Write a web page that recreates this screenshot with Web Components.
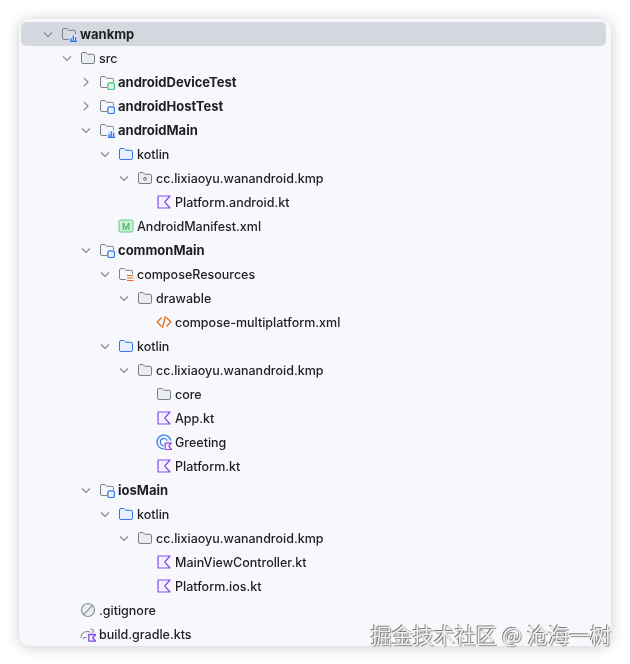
<!DOCTYPE html>
<html lang="zh">
<head>
<meta charset="utf-8">
<title>wankmp</title>
<style>
  html, body { margin: 0; background: #fff; }
  body { width: 630px; height: 664px; overflow: hidden; }
</style>
</head>
<body>
<project-tree>
  <tree-row depth="0" chevron="down" icon="module-bars" bold selected>wankmp</tree-row>
  <tree-row depth="1" chevron="down" icon="folder">src</tree-row>
  <tree-row depth="2" chevron="right" icon="module-green" bold>androidDeviceTest</tree-row>
  <tree-row depth="2" chevron="right" icon="module-blue" bold>androidHostTest</tree-row>
  <tree-row depth="2" chevron="down" icon="module-bars" bold>androidMain</tree-row>
  <tree-row depth="3" chevron="down" icon="folder-blue">kotlin</tree-row>
  <tree-row depth="4" chevron="down" icon="package">cc.lixiaoyu.wanandroid.kmp</tree-row>
  <tree-row depth="5" icon="kotlin">Platform.android.kt</tree-row>
  <tree-row depth="3" icon="manifest">AndroidManifest.xml</tree-row>
  <tree-row depth="2" chevron="down" icon="module-blue" bold>commonMain</tree-row>
  <tree-row depth="3" chevron="down" icon="resources">composeResources</tree-row>
  <tree-row depth="4" chevron="down" icon="folder">drawable</tree-row>
  <tree-row depth="5" icon="xml">compose-multiplatform.xml</tree-row>
  <tree-row depth="3" chevron="down" icon="folder-blue">kotlin</tree-row>
  <tree-row depth="4" chevron="down" icon="folder">cc.lixiaoyu.wanandroid.kmp</tree-row>
  <tree-row depth="5" icon="folder">core</tree-row>
  <tree-row depth="5" icon="kotlin">App.kt</tree-row>
  <tree-row depth="5" icon="greeting">Greeting</tree-row>
  <tree-row depth="5" icon="kotlin">Platform.kt</tree-row>
  <tree-row depth="2" chevron="down" icon="module-blue" bold>iosMain</tree-row>
  <tree-row depth="3" chevron="down" icon="folder-blue">kotlin</tree-row>
  <tree-row depth="4" chevron="down" icon="folder">cc.lixiaoyu.wanandroid.kmp</tree-row>
  <tree-row depth="5" icon="kotlin">MainViewController.kt</tree-row>
  <tree-row depth="5" icon="kotlin">Platform.ios.kt</tree-row>
  <tree-row depth="1" icon="ignore">.gitignore</tree-row>
  <tree-row depth="1" icon="gradle">build.gradle.kts</tree-row>
  <water-mark slot="mark">掘金技术社区 @ 沧海一树</water-mark>
</project-tree>

<script>
/* trazos base de los iconos */
const FOLDER = 'M1.500 4a1.500 1.500 0 0 1 1.500-1.500h3l1.800 1.800H13a1.500 1.500 0 0 1 1.500 1.500v6.200a1.500 1.500 0 0 1-1.500 1.500H3A1.500 1.500 0 0 1 1.500 12z';
const CUT_FOLDER = 'M8 13.500H3A1.500 1.500 0 0 1 1.500 12V4A1.500 1.500 0 0 1 3 2.500h3l1.800 1.800H13a1.500 1.500 0 0 1 1.500 1.500V8';
const KOTLIN = 'M2 2h12L8.800 8l5.200 6H2z';

const folder = (stroke, fill) =>
  `<path d="${FOLDER}" fill="${fill}" stroke="${stroke}"/>`;
const cutFolder = `<path d="${CUT_FOLDER}" fill="none" stroke="#7c808c"/>`;
const badge = (stroke, fill) =>
  `<rect x="8.800" y="8.800" width="6.700" height="6.700" rx="1.800" fill="${fill}" stroke="${stroke}" stroke-width="1.200"/>`;

const ICONS = {
  'folder': folder('#7c808c', '#ebecf0'),
  'folder-blue': folder('#3574f0', '#e7effd'),
  'package': folder('#7c808c', '#ebecf0') + '<circle cx="8" cy="8.800" r="1.400" fill="none" stroke="#6c707e"/>',
  'module-green': cutFolder + badge('#3fc07a', '#dff5e6'),
  'module-blue': cutFolder + badge('#3574f0', '#e7effd'),
  'module-bars': cutFolder +
    '<rect x="8.500" y="8.500" width="7.500" height="7.500" rx="1.500" fill="#dbe6fb"/><path d="M10 15.500v-3.500M12.300 15.500V9.500M14.600 15.500v-4.500M8.800 15.500H16" fill="none" stroke="#3574f0" stroke-width="1.300"/>',
  'resources': cutFolder +
    '<path d="M9 9.500h6.500M9 12h6.500M9 14.500h6.500" fill="none" stroke="#e66d17" stroke-width="1.200"/>',
  'kotlin': `<path d="${KOTLIN}" fill="#f3effe" stroke="#834df0" stroke-width="1.200" stroke-linejoin="round"/>`,
  'manifest': '<rect x="1" y="2" width="14" height="12" rx="1.500" fill="#c9f2d6" stroke="#62c98a"/>' +
    '<text x="8" y="11.500" text-anchor="middle" font-family="Inter, sans-serif" font-size="9" fill="#3fae6a">M</text>',
  'xml': '<path d="M5.500 3.500 1.200 8l4.300 4.500M10.500 3.500 14.800 8l-4.300 4.500" fill="none" stroke="#e66d17" stroke-width="1.300"/><path d="M9.500 2 6.500 14" fill="none" stroke="#e66d17" stroke-width="1.300"/>',
  'greeting': '<path d="M8 15a7 7 0 1 1 6.800-8.500" fill="#e7effd" stroke="#3574f0" stroke-width="1.200"/><path d="M8 11.500a3.500 3.500 0 1 1 3.200-4.800" fill="#fff" stroke="#3574f0" stroke-width="1.100"/>' +
    '<path d="M9.200 9.200h6.300l-2.700 3 2.700 3.300H9.200z" fill="#f3effe" stroke="#834df0" stroke-width="1.200" stroke-linejoin="round"/>',
  'ignore': '<circle cx="8" cy="8" r="6.500" fill="#ebecf0" stroke="#8b8f9a" stroke-width="1.200"/><path d="M3.600 12.600 12.400 3.400" fill="none" stroke="#8b8f9a" stroke-width="1.200"/>',
  'gradle': '<path d="M.8 12c.5-3 2.200-5.700 4.700-6.200 1.800-.4 3.500-.2 4.800.3M10.500 3.300c1.200-.7 3 0 3 1.400 0 1-.8 1.500-1.700 1.700M3 13.500l.7-2h3.300" fill="none" stroke="#8b8f9a" stroke-width="1.100"/>' +
    '<path d="M8.800 8.500h6.900l-3 3.300 3 3.400H8.800z" fill="#f3effe" stroke="#834df0" stroke-width="1.300" stroke-linejoin="round"/>'
};

/* tarjeta con sombra que contiene el arbol */
class ProjectTree extends HTMLElement {
  constructor() {
    super();
    this.attachShadow({ mode: 'open' });
  }

  connectedCallback() {
    this.shadowRoot.innerHTML = `
      <style>
        :host {
          display: block;
          padding: 19px 19px 18px 19px;
          position: relative;
          height: 664px;
          box-sizing: border-box;
        }
        .tarjeta {
          height: 100%;
          box-sizing: border-box;
          padding: 3px 5px 0 2px;
          background: #f7f8fc;
          border-radius: 10px;
          box-shadow: 0 1px 14px rgba(0, 0, 0, 0.2);
          overflow: hidden;
        }
        .filas { filter: blur(0.45px); }
      </style>
      <div class="tarjeta"><div class="filas"><slot></slot></div></div>
      <slot name="mark"></slot>
    `;
  }
}

/* componente para cada fila del arbol */
class TreeRow extends HTMLElement {
  constructor() {
    super();
    this.attachShadow({ mode: 'open' });
  }

  connectedCallback() {
    const depth = Number(this.getAttribute('depth') || 0);
    const chevron = this.getAttribute('chevron');
    const icon = ICONS[this.getAttribute('icon')] || '';
    const flecha = {
      down: '<path d="M3 5.500 7 9.500l4-4" />',
      right: '<path d="M5 3l4 4-4 4" />'
    }[chevron] || '';

    this.shadowRoot.innerHTML = `
      <style>
        :host {
          display: flex;
          align-items: center;
          height: 24px;
          padding-left: ${20 + depth * 19}px;
          font: 500 12.500px/24px Inter, "Liberation Sans", sans-serif;
          color: #1e1f22;
          white-space: nowrap;
        }
        :host([selected]) {
          background: #d5d8df;
          border-radius: 5px;
        }
        :host([bold]) { font-weight: 700; font-size: 13px; }
        /* el texto de 12.5px queda un pixel alto sin esto */
        .texto { padding-top: 2px; }
        :host([bold]) .texto { padding-top: 0; }
        .flecha { width: 14px; height: 14px; flex: none; margin-right: 6px; }
        .flecha path { fill: none; stroke: #868a95; stroke-width: 1.200; }
        .icono { width: 16px; height: 16px; flex: none; margin-right: 3px; }
      </style>
      <svg class="flecha" viewBox="0 0 14 14">${flecha}</svg>
      <svg class="icono" viewBox="0 0 16 16">${icon}</svg>
      <span class="texto"><slot></slot></span>
    `;
  }
}

/* marca de agua en relieve, encima de la esquina */
class WaterMark extends HTMLElement {
  constructor() {
    super();
    this.attachShadow({ mode: 'open' });
  }

  connectedCallback() {
    this.shadowRoot.innerHTML = `
      <style>
        :host {
          position: absolute;
          right: 19px;
          bottom: 16px;
          font: 400 21px/28px "Noto Sans CJK SC", sans-serif;
          word-spacing: 0.5px;
          color: #f1f1f1;
          text-shadow: -1px -1px 0 #808080, 1px 1px 1px #909090;
          filter: blur(0.35px);
          white-space: nowrap;
        }
      </style>
      <slot></slot>
    `;
  }
}

customElements.define('project-tree', ProjectTree);
customElements.define('tree-row', TreeRow);
customElements.define('water-mark', WaterMark);
</script>
</body>
</html>
